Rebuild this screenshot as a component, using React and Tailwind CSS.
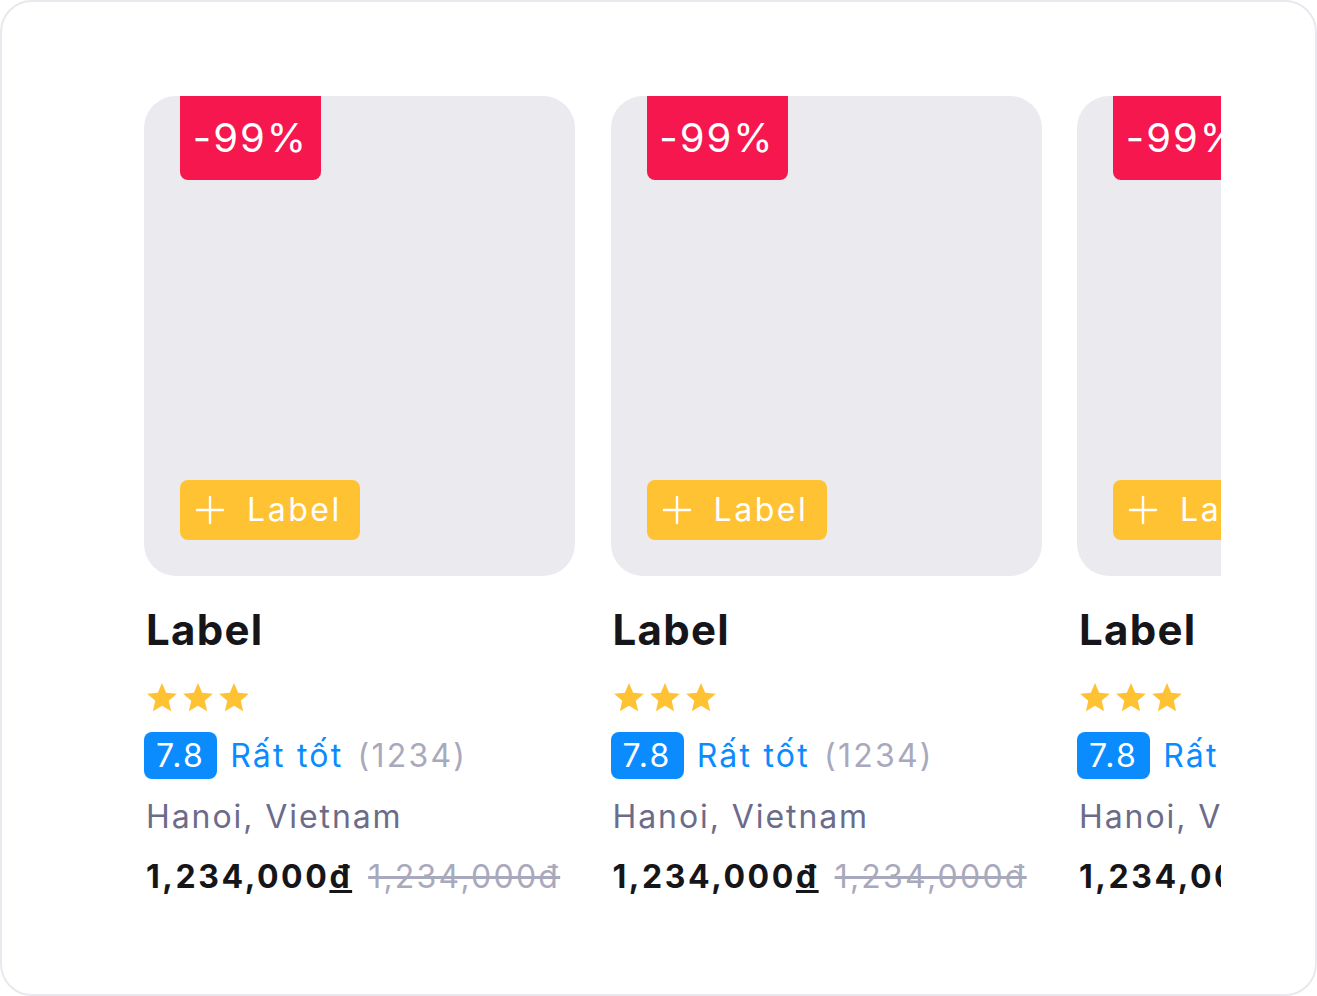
const cards = [0, 1, 2]

function Star() {
  return (
    <svg width="36" height="36" viewBox="0 0 24 24" className="shrink-0">
      <path
        d="M12 2.6l2.8 6.6 7.1.6-5.4 4.7 1.6 7-6.1-3.7-6.1 3.7 1.6-7-5.4-4.7 7.1-.6z"
        fill="#ffc233"
      />
    </svg>
  )
}

function Plus() {
  return (
    <svg width="30" height="30" viewBox="0 0 30 30" className="shrink-0">
      <path d="M15 2v26M2 15h26" stroke="white" strokeWidth="2.4" strokeLinecap="round" />
    </svg>
  )
}

function Card() {
  return (
    <div className="w-[431px] shrink-0 flex flex-col">
      <div className="relative h-[480px] rounded-[32px] bg-[#ebeaef]">
        <div className="absolute left-[36px] top-0 w-[141px] h-[84px] rounded-b-[8px] bg-[#f5174e] flex items-center justify-center text-white text-[40px] leading-none tracking-[0.05em]">
          -99%
        </div>
        <div className="absolute left-[36px] bottom-[36px] h-[60px] w-[180px] rounded-[8px] bg-[#ffc233] flex items-center gap-[22px] pl-[15px] text-white text-[32px] leading-none">
          <Plus />
          <span className="tracking-[0.08em]">Label</span>
        </div>
      </div>
      <div className="mt-[30px] pl-[2px] text-[42px] leading-[48px] font-bold text-[#16161a] tracking-[0.03em]">Label</div>
      <div className="mt-[25px] flex">
        <Star />
        <Star />
        <Star />
      </div>
      <div className="mt-[17px] flex items-center whitespace-nowrap text-[32px] leading-none tracking-[0.07em]">
        <span className="h-[47px] px-[12px] rounded-[8px] bg-[#0a8cff] text-white flex items-center">7.8</span>
        <span className="ml-[13px] text-[#0a8cff]">Rất tốt</span>
        <span className="ml-[14px] text-[#a9a9bd]">(1234)</span>
      </div>
      <div className="mt-[16px] pl-[2px] text-[32px] leading-[44px] text-[#6c6c8a] whitespace-nowrap tracking-[0.06em]">Hanoi, Vietnam</div>
      <div className="mt-[16px] pl-[2px] flex gap-[16px] text-[32px] leading-[44px] whitespace-nowrap">
        <span className="font-bold text-[#16161a] tracking-[0.08em]">
          1,234,000<span className="underline">đ</span>
        </span>
        <span className="line-through text-[#a9a9bd] tracking-[0.07em]">1,234,000đ</span>
      </div>
    </div>
  )
}

export default function App() {
  return (
    <div
      className="w-[1317px] h-[996px] bg-white border-2 border-[#e8e8ee] rounded-[32px]"
      style={{ fontFamily: 'Inter, "Noto Sans", sans-serif' }}
    >
      <div className="ml-[142px] mt-[94px] w-[1077px] overflow-hidden flex gap-[35.5px]">
        {cards.map(i => (
          <Card key={i} />
        ))}
      </div>
    </div>
  )
}
